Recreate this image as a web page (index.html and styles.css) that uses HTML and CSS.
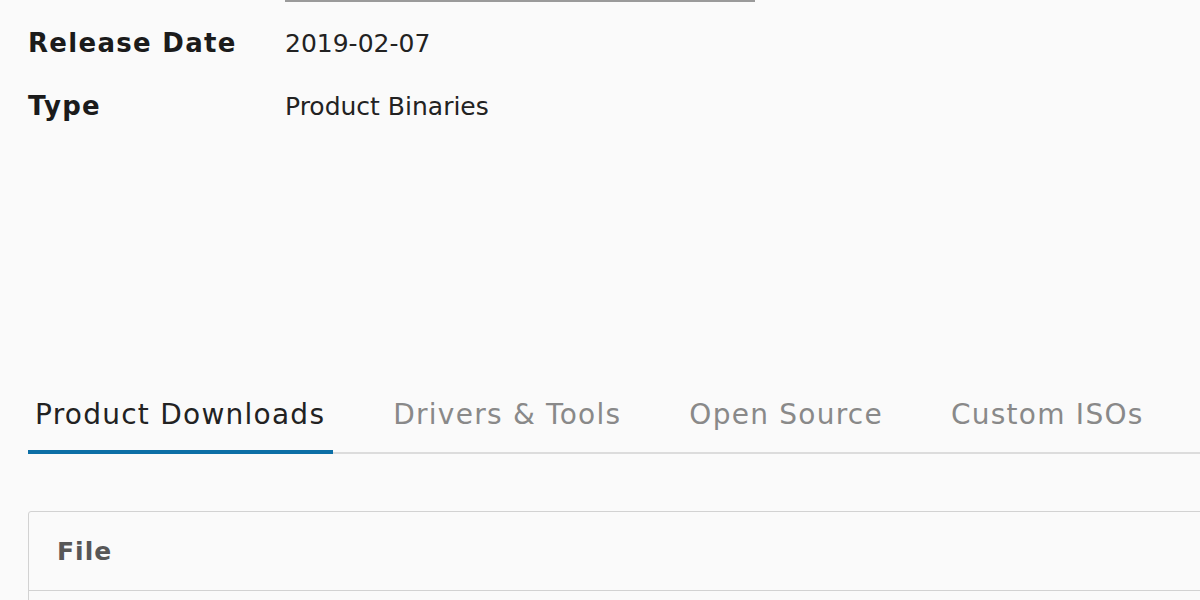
FILE: index.html
```html
<!DOCTYPE html>
<html lang="en">

<head>
    <meta charset="UTF-8" />
    <title>Product Downloads</title>
    <link rel="stylesheet" href="styles.css">
</head>

<body>
    <div class="page">
        <!-- Details -->
        <div class="details">
            <div class="detail-row top-row">
                <span class="label"></span>
                <span class="value"><span class="select-edge"></span></span>
            </div>
            <div class="detail-row">
                <span class="label">Release Date</span>
                <span class="value">2019-02-07</span>
            </div>
            <div class="detail-row">
                <span class="label">Type</span>
                <span class="value">Product Binaries</span>
            </div>
        </div>

        <!-- Tabs -->
        <ul class="tabs">
            <li class="tab active">Product Downloads</li>
            <li class="tab">Drivers &amp; Tools</li>
            <li class="tab">Open Source</li>
            <li class="tab">Custom ISOs</li>
        </ul>

        <!-- Table -->
        <div class="grid">
            <div class="grid-header">
                <div class="grid-cell">File</div>
            </div>
            <div class="grid-row"></div>
        </div>
    </div>
</body>

</html>
```

FILE: styles.css
```css
* {
    box-sizing: border-box;
}

body {
    margin: 0;
    padding: 0;
    background: #fafafa;
    color: #1b1b1b;
    font-family: "DejaVu Sans", sans-serif;
    overflow: hidden;
}

.page {
    padding-left: 28px;
}

.details {
    display: flex;
    flex-direction: column;
}

.detail-row {
    display: flex;
    align-items: baseline;
    height: 63px;
    font-size: 25px;
}

.top-row {
    height: 28px;
    align-items: flex-start;
}

.label {
    width: 257px;
    font-size: 26px;
    font-weight: 700;
    letter-spacing: 1.3px;
}

.value {
    font-weight: 400;
    color: #222;
}

.select-edge {
    display: block;
    width: 470px;
    height: 2px;
    background: #9a9a9a;
}

.tabs {
    display: flex;
    list-style: none;
    margin: 244px 0 0;
    padding: 0;
    border-bottom: 2px solid #dcdcdc;
    width: 1200px;
}

.tab {
    padding: 0 8px 19px 7px;
    margin-right: 53px;
    font-size: 28px;
    letter-spacing: 1.25px;
    color: #898989;
    border-bottom: 4px solid transparent;
    margin-bottom: -2px;
}

.tab.active {
    color: #222;
    border-bottom-color: #0c6fa6;
}

.grid {
    margin-top: 57px;
    width: 1200px;
    border: 1px solid #d2d2d2;
    border-radius: 3px;
    background: #fafafa;
}

.grid-header {
    height: 79px;
    display: flex;
    align-items: center;
    border-bottom: 1px solid #d2d2d2;
}

.grid-cell {
    padding-left: 28px;
    font-size: 25px;
    font-weight: 700;
    letter-spacing: 1px;
    color: #575757;
}

.grid-row {
    height: 60px;
}
```
